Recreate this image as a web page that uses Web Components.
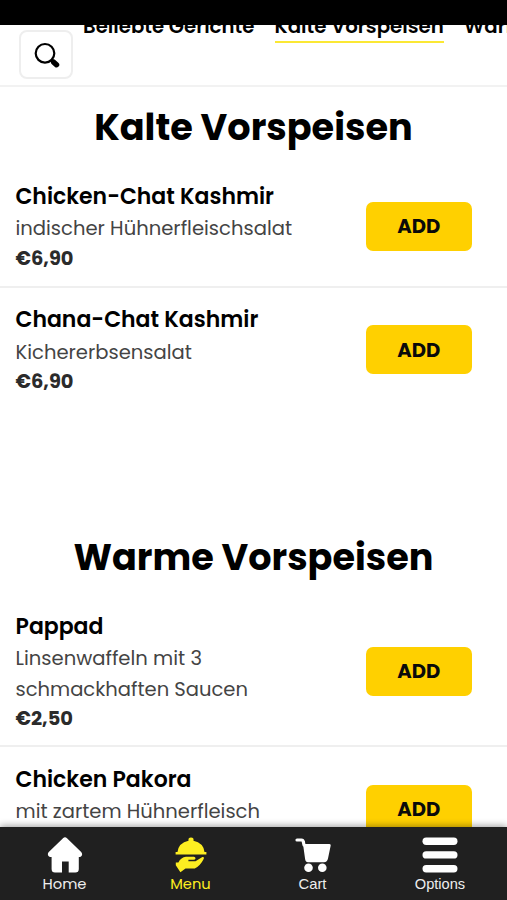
<!DOCTYPE html>
<html lang="de"><head><meta charset="utf-8"><title>Speisekarte</title>
<style>
html,body{margin:0;height:100%;overflow:hidden;background:#fff}
body{font-family:Poppins,Inter,"Liberation Sans",sans-serif;color:#000}
</style></head><body>
<menu-app>
  <top-bar slot="top">
    <fit-text w="171.5">Beliebte Gerichte</fit-text>
    <fit-text w="169.5" class="active">Kalte Vorspeisen</fit-text>
    <fit-text w="192">Warme Vorspeisen</fit-text>
  </top-bar>
  <menu-section style="height:416px">
    <fit-text slot="title" w="318.5">Kalte Vorspeisen</fit-text>
    <menu-item><fit-text slot="name" w="258.5">Chicken-Chat Kashmir</fit-text><fit-text slot="desc" w="276.5">indischer Hühnerfleischsalat</fit-text><fit-text slot="price" w="58">€6,90</fit-text></menu-item>
    <menu-item last><fit-text slot="name" w="243">Chana-Chat Kashmir</fit-text><fit-text slot="desc" w="176.5">Kichererbsensalat</fit-text><fit-text slot="price" w="58">€6,90</fit-text></menu-item>
  </menu-section>
  <menu-section>
    <fit-text slot="title" w="360">Warme Vorspeisen</fit-text>
    <menu-item><fit-text slot="name" w="88">Pappad</fit-text><fit-text slot="desc" w="186.5">Linsenwaffeln mit 3</fit-text><fit-text slot="desc" w="232.5">schmackhaften Saucen</fit-text><fit-text slot="price" w="57.5">€2,50</fit-text></menu-item>
    <menu-item last><fit-text slot="name" w="176">Chicken Pakora</fit-text><fit-text slot="desc" w="244.5">mit zartem Hühnerfleisch</fit-text></menu-item>
  </menu-section>
  <nav-bar slot="nav">
    <nav-item><svg slot="icon" width="36" height="36" viewBox="0 0 36 36" fill="#fff"><path d="M16 1.2Q18 -.5 20 1.2L34.2 15Q36.2 17.5 34 19.5Q33.2 20 31.8 20V32Q31.8 35.5 28.3 35.5H21.7V24.5H15V35.5H8Q4.6 35.5 4.6 32V20Q2.8 20 2 19.4Q-.2 17.4 1.8 15Z"/></svg><fit-text w="44">Home</fit-text></nav-item>
    <nav-item active><svg slot="icon" width="32" height="36" viewBox="0 0 32 36" fill="#fdee21"><path d="M13.5 3.8Q13 .5 16 .5T18.5 3.8Q28.5 6 29.5 15H31.4V17.5H.6V15H2.5Q3.5 6 13.5 3.8Z"/><path d="M.8 25.5H3.4Q6 20.2 11 19.8H18.8Q20.6 20 20.5 21.4Q20.3 22.8 18.5 22.8H13.4V24.2H20.5L27.4 20Q29.6 19.6 28.8 21.7Q25.5 28.5 19.8 31.5H10.5L5.4 35.2L.8 28.2Z"/></svg><fit-text w="40.5">Menu</fit-text></nav-item>
    <nav-item arial><svg slot="icon" width="36" height="36" viewBox="0 0 36 36" fill="#fff"><path d="M2 3H6.5Q8 3 8.3 4.7L9 8" fill="none" stroke="#fff" stroke-width="3.2" stroke-linecap="round"/><path d="M8 7H34.5Q36 7 35.7 8.5L33 21.5Q32.3 25.2 29 25.2H13Q10.6 25.2 10.1 22Z"/><circle cx="13.5" cy="30.7" r="4.3"/><circle cx="27.3" cy="30.7" r="4.3"/></svg><fit-text w="28">Cart</fit-text></nav-item>
    <nav-item arial><svg slot="icon" width="36" height="36" viewBox="0 0 36 36" fill="#fff"><rect x=".5" y=".5" width="35" height="7.4" rx="3.7"/><rect x=".5" y="14.2" width="35" height="7.4" rx="3.7"/><rect x=".5" y="28" width="35" height="7.4" rx="3.7"/></svg><fit-text w="50.5">Options</fit-text></nav-item>
  </nav-bar>
</menu-app>
<script>
const define=(name,html,setup)=>customElements.define(name,class extends HTMLElement{
  constructor(){super();this.attachShadow({mode:'open'}).innerHTML=html;}
  connectedCallback(){if(setup)setup(this);}
});
define('menu-app',`<style>:host{display:flex;flex-direction:column;height:900px;overflow:hidden;background:#fff}.status{flex:0 0 25px;background:#000}main{flex:1;min-height:0;overflow:hidden}</style>
<div class="status"></div><slot name="top"></slot><main><slot></slot></main><slot name="nav"></slot>`);
define('top-bar',`<style>:host{display:flex;box-sizing:border-box;flex:0 0 62px;height:62px;border-bottom:2px solid #f2f2f2;overflow:hidden;padding:5px 0 0 19px}
.search{box-sizing:border-box;flex:0 0 54px;height:49px;border:2px solid #eee;border-radius:8px;display:grid;place-items:center}
.tabs{display:flex;gap:20px;margin:-18px 0 0 10px;height:32px}
::slotted(*){box-sizing:border-box;height:31px;line-height:28px;font-size:19.5px;font-weight:600;flex:none}
::slotted(.active){border-bottom:2px solid #fbe834}</style>
<div class="search"><svg width="28" height="28" viewBox="0 0 28 28"><circle cx="13" cy="12.3" r="9.3" fill="none" stroke="#000" stroke-width="2.2"/><path d="M19.5 19L21.5 21" stroke="#000" stroke-width="3.5"/><path d="M21.7 21.2L24.5 23.7" stroke="#000" stroke-width="5.5" stroke-linecap="round"/></svg></div><div class="tabs"><slot></slot></div>`);
define('menu-section',`<style>:host{display:block;padding-top:14px;height:350px}
header{display:flex;justify-content:center;height:63px;line-height:54px;font-size:36.5px;font-weight:700}</style><header><slot name="title"></slot></header><slot></slot>`);
define('menu-item',`<style>:host{display:flex;box-sizing:border-box;justify-content:space-between;align-items:center;padding:16.5px 35.5px 10.5px 15.5px;border-bottom:2px solid #efefef;min-height:123.5px}
:host([last]){border-color:transparent}
.copy{display:flex;flex-direction:column;align-self:flex-start;align-items:flex-start}
::slotted([slot=name]){font-size:21px;font-weight:600;line-height:32px;margin-bottom:.5px}
::slotted([slot=desc]){font-size:19.2px;font-weight:400;line-height:30.5px;color:#444}
::slotted([slot=price]){font-size:18.8px;font-weight:700;line-height:30.5px;color:#2b2b2b}
button{width:105.5px;height:49px;margin-bottom:3px;border:0;border-radius:7px;background:#ffd000;font:700 18.5px Poppins,Inter,sans-serif;color:#0a0a0a;padding:0;display:flex;align-items:center;justify-content:center}</style>
<div class="copy"><slot name="name"></slot><slot name="desc"></slot><slot name="price"></slot></div><button><fit-text w="43">ADD</fit-text></button>`);
define('nav-bar',`<style>:host{display:grid;grid-template-columns:129px 123px 121px 134px;flex:0 0 73px;background:#202020;box-shadow:0 -1px 7px rgba(0,0,0,.4);z-index:1}</style><slot></slot>`);
define('nav-item',`<style>:host{display:flex;flex-direction:column;align-items:center;padding-top:10px;color:#eee;font-size:13.5px;line-height:22px}
:host([active]){color:#fdee21}:host([arial]){font-family:"Liberation Sans",Arial,sans-serif;font-size:14.5px}::slotted(svg){display:block}</style><slot name="icon"></slot><slot></slot>`);
// Sizes its text so that one line fills the given width.
define('fit-text',`<style>:host{display:block;white-space:nowrap}span{display:inline-block;vertical-align:top;white-space:nowrap}</style><span><slot></slot></span>`,el=>{
  const w=+el.getAttribute('w'),s=el.shadowRoot.querySelector('span');
  requestAnimationFrame(()=>{el.style.width=w+'px';el.style.fontSize=parseFloat(getComputedStyle(el).fontSize)*w/s.getBoundingClientRect().width+'px';});
});
</script></body></html>
